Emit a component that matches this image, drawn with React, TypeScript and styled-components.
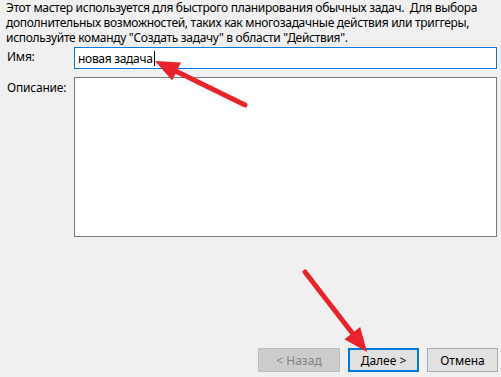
import React from 'react';
import styled, { createGlobalStyle } from 'styled-components';

const GlobalStyle = createGlobalStyle`
  html, body {
    margin: 0;
    padding: 0;
    background: #f0f0f0;
  }
  body {
    font-family: 'Noto Sans', 'Open Sans', Arial, sans-serif;
    font-size: 12px;
    color: #000;
  }
`;

const Wizard = styled.div`
  position: relative;
  width: 501px;
  height: 377px;
  overflow: hidden;
  background: #f0f0f0;
  display: flex;
  flex-direction: column;
`;

const Intro = styled.p`
  margin: 0;
  padding: 0 0 0 6px;
  line-height: 15px;
  font-size: 12px;
  letter-spacing: -0.3px;
  white-space: pre;
`;

const Form = styled.div`
  display: grid;
  grid-template-columns: 74px 1fr;
  grid-template-rows: 22px 160px;
  row-gap: 8px;
  padding: 0 4px 0 0;
  margin-top: 2px;
`;

const Label = styled.label<{ $top?: number }>`
  padding-left: 7px;
  padding-top: ${({ $top }) => $top ?? 0}px;
  line-height: 20px;
  letter-spacing: -0.2px;
`;

const NameField = styled.div`
  border: 1px solid #0078d7;
  background: #fff;
  display: flex;
  align-items: center;
  padding-left: 3px;
  letter-spacing: -0.3px;
`;

const Caret = styled.span`
  display: inline-block;
  width: 1px;
  height: 15px;
  background: #000;
  margin-left: 1px;
`;

const Description = styled.div`
  border: 1px solid #7a7a7a;
  background: #fff;
`;

const Footer = styled.div`
  margin-top: auto;
  display: flex;
  justify-content: flex-end;
  gap: 8px;
  padding: 0 3px 5px 0;
`;

const Button = styled.button<{ $variant?: 'disabled' | 'default' | 'plain'; $w: number }>`
  width: ${({ $w }) => $w}px;
  height: 24px;
  margin: 0;
  font-family: inherit;
  font-size: 12px;
  padding: 0;
  background: ${({ $variant }) => ($variant === 'disabled' ? '#cccccc' : '#e1e1e1')};
  color: ${({ $variant }) => ($variant === 'disabled' ? '#838383' : '#000')};
  border: ${({ $variant }) =>
    $variant === 'default'
      ? '2px solid #0078d7'
      : $variant === 'disabled'
      ? '1px solid #bfbfbf'
      : '1px solid #adadad'};
`;

const Overlay = styled.svg`
  position: absolute;
  left: 0;
  top: 0;
  pointer-events: none;
`;

const Arrow = ({ x1, y1, x2, y2 }: { x1: number; y1: number; x2: number; y2: number }) => {
  const dx = x2 - x1;
  const dy = y2 - y1;
  const len = Math.hypot(dx, dy);
  const ux = dx / len;
  const uy = dy / len;
  const head = 24;
  const half = 10;
  const bx = x2 - ux * head;
  const by = y2 - uy * head;
  const px = -uy;
  const py = ux;
  const points = `${x2},${y2} ${bx + px * half},${by + py * half} ${bx - px * half},${by - py * half}`;
  return (
    <g>
      <line
        x1={x1}
        y1={y1}
        x2={bx + ux * 4}
        y2={by + uy * 4}
        stroke="#e8232b"
        strokeWidth={5}
        strokeLinecap="round"
      />
      <polygon points={points} fill="#e8232b" />
    </g>
  );
};

export default function App() {
  return (
    <>
      <GlobalStyle />
      <Wizard>
        <Intro>
          {'Этот мастер используется для быстрого планирования обычных задач.  Для выбора\nдополнительных возможностей, таких как многозадачные действия или триггеры,\nиспользуйте команду "Создать задачу" в области "Действия".'}
        </Intro>
        <Form>
          <Label>Имя:</Label>
          <NameField>
            новая задача
            <Caret />
          </NameField>
          <Label $top={1}>Описание:</Label>
          <Description />
        </Form>
        <Footer>
          <Button $variant="disabled" $w={82}>
            &lt; Назад
          </Button>
          <Button $variant="default" $w={71}>
            Далее &gt;
          </Button>
          <Button $variant="plain" $w={71}>
            Отмена
          </Button>
        </Footer>
        <Overlay width={501} height={377} viewBox="0 0 501 377">
          <Arrow x1={245} y1={105} x2={155} y2={61} />
          <Arrow x1={305} y1={272} x2={367} y2={352} />
        </Overlay>
      </Wizard>
    </>
  );
}
